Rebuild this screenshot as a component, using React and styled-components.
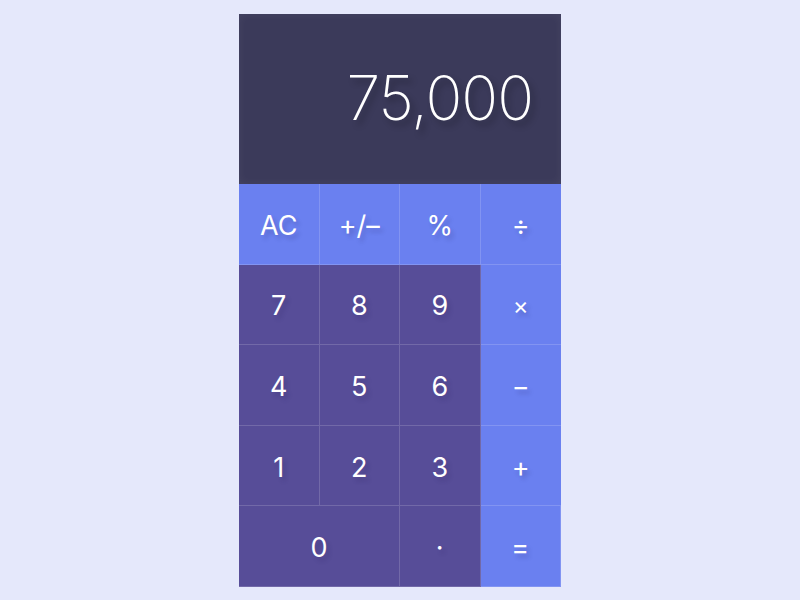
import React from 'react';
import styled, { createGlobalStyle } from 'styled-components';

const GlobalStyle = createGlobalStyle`
  html, body {
    margin: 0;
    padding: 0;
    background: #e5e8fb;
    font-family: Inter, "Liberation Sans", sans-serif;
  }
`;

const Page = styled.div`
  display: flex;
  justify-content: center;
  padding-top: 14px;
`;

const Calculator = styled.div`
  width: 322px;
  display: flex;
  flex-direction: column;
`;

const Display = styled.div`
  height: 170px;
  background: #3b3a5a;
  box-shadow: inset 0 0 10px rgba(255, 255, 255, 0.06);
  display: flex;
  align-items: center;
  justify-content: flex-end;
  padding: 0 28px 2px 0;
  box-sizing: border-box;
  color: #ffffff;
  font-size: 61px;
  font-weight: 200;
  letter-spacing: -1px;
  text-shadow: 4px 5px 6px rgba(0, 0, 0, 0.28);
`;

const Keys = styled.div`
  display: grid;
  grid-template-columns: repeat(4, 1fr);
  grid-auto-rows: 80.6px;
`;

const Key = styled.div`
  grid-column: span ${(p) => p.$span || 1};
  background: ${(p) => (p.$op ? '#6a80f0' : '#574d98')};
  border-right: 1px solid rgba(255, 255, 255, 0.16);
  border-bottom: 1px solid rgba(255, 255, 255, 0.16);
  display: flex;
  align-items: center;
  justify-content: center;
  padding-top: 3px;
  color: #ffffff;
  font-size: ${(p) => p.$size || 27}px;
  font-weight: 400;
  text-shadow: 3px 4px 4px rgba(40, 30, 90, 0.22);
  box-sizing: border-box;
  &:nth-child(4n) {
    border-right: none;
  }
`;

const keys = [
  { label: 'AC', op: true },
  { label: '+/–', op: true },
  { label: '%', op: true },
  { label: '÷', op: true },
  { label: '7' },
  { label: '8' },
  { label: '9' },
  { label: '×', op: true, size: 24 },
  { label: '4' },
  { label: '5' },
  { label: '6' },
  { label: '−', op: true },
  { label: '1' },
  { label: '2' },
  { label: '3' },
  { label: '+', op: true },
  { label: '0', span: 2 },
  { label: '·' },
  { label: '=', op: true },
];

export default function App() {
  return (
    <Page>
      <GlobalStyle />
      <Calculator>
        <Display>75,000</Display>
        <Keys>
          {keys.map((k) => (
            <Key key={k.label} $op={k.op} $span={k.span} $size={k.size}>
              {k.label}
            </Key>
          ))}
        </Keys>
      </Calculator>
    </Page>
  );
}
